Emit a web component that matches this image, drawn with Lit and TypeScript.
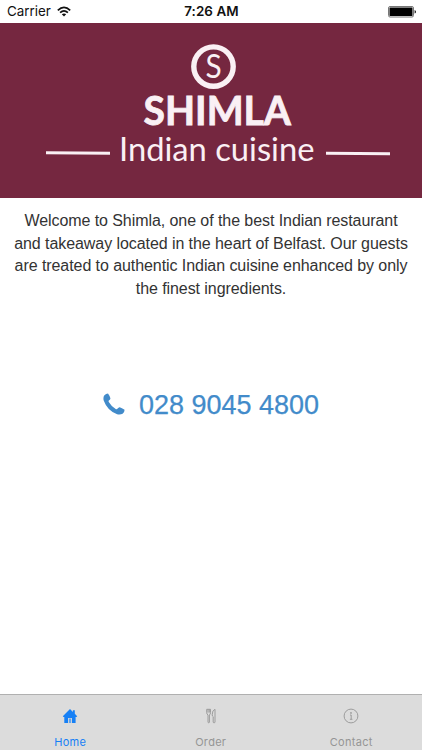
import { html, css, svg, LitElement } from 'lit';
import { customElement, property, state } from 'lit/decorators.js';
import { classMap } from 'lit/directives/class-map.js';

const icons = {
  home: svg`
    <path d="M8 1 L10.9 3.9 V2.2 H12.8 V5.8 L15.2 8.3 L14.5 9 H13.6 V15 H9.9 V10 H6.1 V15 H2.3 V9 H1.5 L0.8 8.3 Z" fill="currentColor" />
    <path d="M7 10.6 H9 V15 H7 Z" fill="currentColor" opacity="0.6" />
  `,
  order: svg`
    <g fill="none" stroke="currentColor" stroke-width="0.9" stroke-linejoin="round">
      <path d="M3.7 1.3 V4.6 Q3.7 6.2 5 7 V14 Q5 14.8 5.7 14.8 Q6.4 14.8 6.4 14 V7 Q7.5 6.2 7.5 4.6 V1.3 M5 1.3 V4.6 M6.3 1.3 V4.6 M3.7 1.3 H7.5" />
      <path d="M12 1.3 Q9.2 2.2 9.2 6.8 Q9.2 8.3 10.2 8.7 V14 Q10.2 14.8 11.1 14.8 Q12 14.8 12 14 Z" />
    </g>
  `,
  contact: svg`
    <circle cx="8" cy="8" r="6.9" fill="none" stroke="currentColor" stroke-width="0.9" />
    <circle cx="8" cy="4.9" r="0.85" fill="currentColor" />
    <path d="M7 7 H8.2 V11.2 M6.9 11.3 H9.4" fill="none" stroke="currentColor" stroke-width="0.9" />
  `,
};

@customElement('status-bar')
export class StatusBar extends LitElement {
  static styles = css`
    :host {
      display: grid;
      grid-template-columns: 1fr auto 1fr;
      align-items: center;
      box-sizing: border-box;
      height: 23px;
      padding: 0 6px 0 7px;
      background: #fff;
      color: #111;
      font: 13.4px/23px Inter, sans-serif;
    }

    .carrier {
      display: flex;
      align-items: center;
      gap: 6px;
    }

    .time {
      font-weight: 600;
      letter-spacing: 0.1px;
    }

    .battery {
      justify-self: end;
    }

    svg {
      display: block;
    }
  `;

  render() {
    return html`
      <div class="carrier">
        <span>Carrier</span>
        <svg width="14" height="11" viewBox="0 0 14 11">
          <g fill="none" stroke="#111" stroke-width="1.7">
            <path d="M0.8 4.3 Q7 -1.7 13.2 4.3" />
            <path d="M3.1 6.7 Q7 3 10.9 6.7" />
          </g>
          <path d="M4.8 8.3 Q7 6.5 9.2 8.3 L7 10.5 Z" fill="#111" />
        </svg>
      </div>
      <span class="time">7:26 AM</span>
      <svg class="battery" width="28" height="12" viewBox="0 0 28 12">
        <rect x="0.5" y="0.5" width="25" height="10.5" rx="1.5" fill="#fff" stroke="#777" />
        <rect x="1.5" y="1.5" width="23" height="8.5" rx="0.5" fill="#000" />
        <path d="M26.6 4 Q28 4.4 28 5.8 Q28 7.2 26.6 7.6 Z" fill="#111" />
      </svg>
    `;
  }
}

@customElement('shimla-banner')
export class ShimlaBanner extends LitElement {
  static styles = css`
    :host {
      display: block;
      height: 175px;
      background: #752740;
    }

    svg {
      display: block;
      font-family: Lato, 'Open Sans', sans-serif;
    }

    .name {
      font-size: 40px;
      font-weight: 700;
      stroke: #faf0f4;
      stroke-width: 0.8px;
    }

    .tagline {
      font-size: 32px;
    }

    .initial {
      font-size: 32px;
    }
  `;

  render() {
    return html`
      <svg width="422" height="175" viewBox="0 0 422 175" fill="#faf0f4">
        <circle cx="213.5" cy="43.6" r="19.7" fill="none" stroke="#faf0f4" stroke-width="5.4" />
        <text class="initial" x="205.4" y="55" textLength="16.2" lengthAdjust="spacingAndGlyphs">S</text>
        <text class="name" x="143.5" y="101.8" textLength="147.5" lengthAdjust="spacingAndGlyphs">SHIMLA</text>
        <text class="tagline" x="119" y="137.8" textLength="195.5" lengthAdjust="spacingAndGlyphs">Indian cuisine</text>
        <path d="M46 128.2 L110 128.8 V131.8 L46 131.2 Z" />
        <path d="M326 128.7 L390 129.2 V132.2 L326 131.7 Z" />
      </svg>
    `;
  }
}

@customElement('tab-item')
export class TabItem extends LitElement {
  static styles = css`
    :host {
      display: block;
    }

    .tab {
      display: flex;
      flex-direction: column;
      align-items: center;
      gap: 11px;
      padding-top: 13px;
      color: #959595;
      font: 11px/14px Inter, sans-serif;
      letter-spacing: 0.3px;
    }

    .active {
      color: #1680f5;
    }

    svg {
      display: block;
    }
  `;

  @property() icon: keyof typeof icons = 'home';

  @property() label = '';

  @property({ type: Boolean }) active = false;

  render() {
    return html`
      <div class=${classMap({ tab: true, active: this.active })}>
        <svg width="16" height="16" viewBox="0 0 16 16">${icons[this.icon]}</svg>
        <span>${this.label}</span>
      </div>
    `;
  }
}

@customElement('app-root')
export class AppRoot extends LitElement {
  static styles = css`
    :host {
      display: flex;
      flex-direction: column;
      height: 100vh;
      overflow: hidden;
      background: #fff;
      font-family: 'Liberation Sans', Arial, sans-serif;
    }

    main {
      flex: 1;
      text-align: center;
    }

    .welcome {
      margin: 12px 0 0;
      color: #333;
      font-size: 16px;
      letter-spacing: -0.07px;
      line-height: 22.5px;
    }

    .line {
      display: block;
      white-space: nowrap;
    }

    .phone {
      display: flex;
      align-items: center;
      justify-content: center;
      gap: 14px;
      margin-top: 89px;
      color: #428bca;
      font-size: 27px;
      line-height: 32px;
      text-decoration: none;
      -webkit-text-stroke: 0.25px #428bca;
    }

    .handset {
      margin-bottom: 2px;
    }

    .tabs {
      display: grid;
      grid-template-columns: repeat(3, 1fr);
      box-sizing: border-box;
      height: 56px;
      padding-right: 0.5px;
      border-top: 1px solid #b0b0b0;
      background: #dcdcdc;
    }
  `;

  @state() private selected = 'home';

  private tabs: { icon: keyof typeof icons; label: string }[] = [
    { icon: 'home', label: 'Home' },
    { icon: 'order', label: 'Order' },
    { icon: 'contact', label: 'Contact' },
  ];

  private lines = [
    'Welcome to Shimla, one of the best Indian restaurant',
    'and takeaway located in the heart of Belfast. Our guests',
    'are treated to authentic Indian cuisine enhanced by only',
    'the finest ingredients.',
  ];

  render() {
    return html`
      <status-bar></status-bar>
      <shimla-banner></shimla-banner>
      <main>
        <p class="welcome">${this.lines.map((line) => html`<span class="line">${line}</span>`)}</p>
        <a class="phone" href="tel:02890454800">
          <svg class="handset" width="22" height="22" viewBox="0 0 22 22">
            <path
              d="M1.2 2.6 Q3 0.6 5 0.5 Q6.4 2.3 7.4 5.2 Q7.6 6.4 5.9 7.5 Q5.3 8.1 5.8 9 Q8.4 13.6 13 16.2 Q13.8 16.5 14.4 15.8 Q15.8 13.9 16.8 14.2 Q19.6 15.3 21.6 16.8 Q21.6 19.2 19.6 20.8 Q17.3 22 14.1 21.3 Q4.3 17.6 0.8 7.8 Q-0.1 4.6 1.2 2.6 Z"
              fill="currentColor"
            />
          </svg>
          <span>028 9045 4800</span>
        </a>
      </main>
      <nav class="tabs">
        ${this.tabs.map(
          (tab) => html`
            <tab-item
              .icon=${tab.icon}
              .label=${tab.label}
              .active=${tab.icon === this.selected}
              @click=${() => (this.selected = tab.icon)}
            ></tab-item>
          `
        )}
      </nav>
    `;
  }
}
